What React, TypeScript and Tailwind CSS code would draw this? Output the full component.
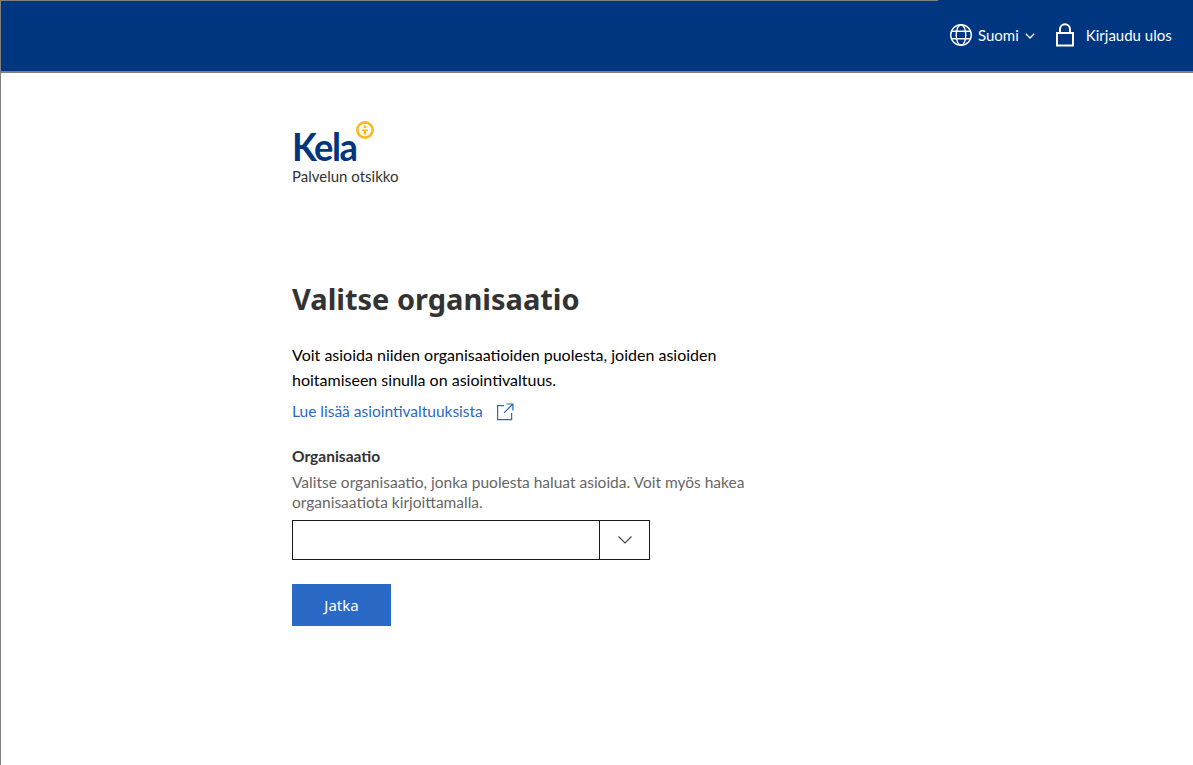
import React from "react";

const lato = "font-['Lato','Liberation_Sans',sans-serif]";

function Globe() {
  return (
    <svg width="24" height="24" viewBox="0 0 24 24" fill="none" stroke="currentColor" strokeWidth="1.4">
      <circle cx="12" cy="12" r="10.3" />
      <ellipse cx="12" cy="12" rx="4.8" ry="10.3" />
      <path d="M2.6 8.2h18.8M2.6 15.8h18.8" />
    </svg>
  );
}

function Lock() {
  return (
    <svg width="20" height="24" viewBox="0 0 20 24" fill="none" stroke="currentColor" strokeWidth="2">
      <rect x="2" y="10" width="16" height="12.5" />
      <path d="M5 10V6.2a5 5 0 0 1 10 0V10" />
    </svg>
  );
}

function Logo() {
  return (
    <div className="relative h-[44px] w-[90px]">
      <span className="absolute left-0 top-[1px] font-['Lato',sans-serif] text-[39px] leading-[44px] font-bold text-[#003580] tracking-[-1.6px] scale-x-[0.93] origin-left">
        Kela
      </span>
      <svg className="absolute left-[64px] top-[-2px]" width="18" height="18" viewBox="0 0 18 18">
        <circle cx="9" cy="9" r="7.6" fill="none" stroke="#fbb81f" strokeWidth="2.6" />
        <circle cx="9" cy="5.8" r="1.5" fill="#fbb81f" />
        <path d="M6 8.4h6v1.6h-1.7v3.4H7.7V10H6z" fill="#fbb81f" />
      </svg>
    </div>
  );
}

export default function App() {
  return (
    <div className={`min-h-[765px] bg-white border-l border-[#7f7f7f] text-[#333] ${lato}`}>
      <header className="h-[73px] flex bg-[#003580] border-b-2 border-[#808080] text-white">
        <div className="flex-1 border-t border-[#808080]" />
        <div className="w-[255px] flex items-center text-[15px] pb-[1px]">
          <div className="ml-[11px] flex items-center">
            <Globe />
            <span className="ml-[5px]">Suomi</span>
            <svg className="ml-[6px] mt-[1px]" width="10" height="6" viewBox="0 0 10 6" fill="none" stroke="currentColor" strokeWidth="1.3">
              <path d="M.8.8 5 5 9.2.8" />
            </svg>
          </div>
          <div className="ml-[20px] flex items-center">
            <Lock />
            <span className="ml-[11px]">Kirjaudu ulos</span>
          </div>
        </div>
      </header>

      <main className="mx-auto w-[610px]">
        <div className="pt-[50px]">
          <Logo />
          <p className="text-[15px] leading-[20px] mt-[-1px] text-[#333]">Palvelun otsikko</p>
        </div>

        <h1 className="mt-[93px] font-['Noto_Sans',sans-serif] text-[29px] leading-[40px] font-bold text-[#333]">
          Valitse organisaatio
        </h1>

        <p className="mt-[23px] w-[470px] text-[16px] leading-[25px] text-black">
          Voit asioida niiden organisaatioiden puolesta, joiden asioiden hoitamiseen sinulla on asiointivaltuus.
        </p>

        <a className="mt-[7px] flex items-center text-[15.5px] leading-[25px] text-[#2a69c5]">
          Lue lisää asiointivaltuuksista
          <svg className="ml-[13px]" width="18" height="18" viewBox="0 0 18 18" fill="none" stroke="currentColor" strokeWidth="1.2">
            <path d="M8 2.6H1.6v14h14V10M10.5 1h6.4v6.4M16.9 1 8 9.9" />
          </svg>
        </a>

        <h2 className="mt-[22px] text-[15.5px] leading-[20px] font-bold text-[#333]">Organisaatio</h2>
        <p className="mt-[6px] w-[490px] text-[15.5px] leading-[20px] text-[#666]">
          Valitse organisaatio, jonka puolesta haluat asioida. Voit myös hakea organisaatiota kirjoittamalla.
        </p>

        <div className="mt-[8px] flex h-[40px] w-[358px] border border-[#1a1a1a]">
          <div className="flex-1" />
          <div className="w-[50px] flex items-center justify-center border-l border-[#1a1a1a] text-[#444]">
            <svg width="14" height="8" viewBox="0 0 14 8" fill="none" stroke="currentColor" strokeWidth="1.1">
              <path d="M.5.5 7 7 13.5.5" />
            </svg>
          </div>
        </div>

        <button className="mt-[24px] block h-[42px] w-[99px] bg-[#2a69c5] text-white font-['Noto_Sans',sans-serif] text-[15px]">
          Jatka
        </button>
      </main>
    </div>
  );
}
